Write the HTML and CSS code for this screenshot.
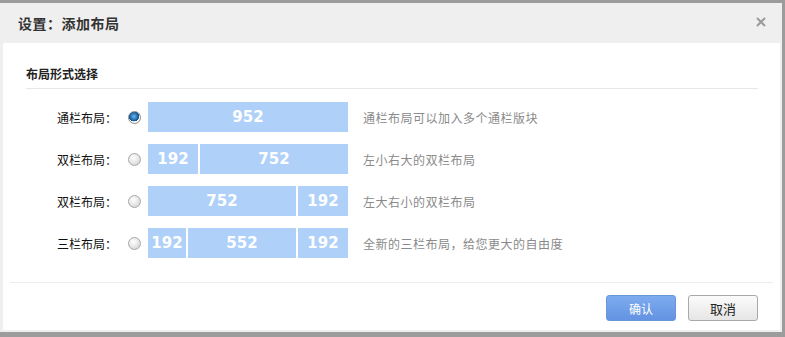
FILE: index.html
```html
<!DOCTYPE html>
<html lang="zh-CN">
<head>
<meta charset="utf-8">
<title>设置：添加布局</title>
<link rel="stylesheet" href="styles.css">
</head>
<body>
<div class="dialog">
  <div class="dialog-head">
    <h1 class="dialog-title">设置：添加布局</h1>
    <span class="dialog-close" aria-label="关闭">
      <svg width="10" height="10" viewBox="0 0 10 10"><path d="M1 1 L9 9 M9 1 L1 9" stroke="#9a9a9a" stroke-width="2" fill="none"/></svg>
    </span>
  </div>
  <div class="dialog-body">
    <div class="section-title">布局形式选择</div>
    <div class="layout-list">
      <div class="layout-row">
        <div class="row-label">通栏布局：</div>
        <span class="radio checked"></span>
        <div class="bar">
          <div class="seg w200">952</div>
        </div>
        <div class="row-desc">通栏布局可以加入多个通栏版块</div>
      </div>
      <div class="layout-row">
        <div class="row-label">双栏布局：</div>
        <span class="radio"></span>
        <div class="bar">
          <div class="seg w50">192</div>
          <div class="seg w148">752</div>
        </div>
        <div class="row-desc">左小右大的双栏布局</div>
      </div>
      <div class="layout-row">
        <div class="row-label">双栏布局：</div>
        <span class="radio"></span>
        <div class="bar">
          <div class="seg w148">752</div>
          <div class="seg w50">192</div>
        </div>
        <div class="row-desc">左大右小的双栏布局</div>
      </div>
      <div class="layout-row">
        <div class="row-label">三栏布局：</div>
        <span class="radio"></span>
        <div class="bar">
          <div class="seg w38">192</div>
          <div class="seg w108">552</div>
          <div class="seg w50">192</div>
        </div>
        <div class="row-desc">全新的三栏布局，给您更大的自由度</div>
      </div>
    </div>
    <div class="dialog-foot">
      <button class="btn btn-primary">确认</button>
      <button class="btn btn-default">取消</button>
    </div>
  </div>
</div>
</body>
</html>
```
FILE: styles.css
```css
html, body {
  margin: 0;
  padding: 0;
  background: #ffffff;
}
body {
  font-family: "Noto Sans CJK SC", "Liberation Sans", sans-serif;
  font-size: 12px;
  color: #222;
}
.dialog {
  width: 785px;
  height: 337px;
  box-sizing: border-box;
  background: #efefef;
  border-top: 3px solid #9c9c9c;
  border-right: 3px solid #9c9c9c;
  border-bottom: 5px solid #9c9c9c;
  padding: 0 2px 2px 3px;
  display: flex;
  flex-direction: column;
}
.dialog-head {
  height: 40px;
  display: flex;
  align-items: center;
  justify-content: space-between;
  padding: 0 14px 0 15px;
}
.dialog-title {
  margin: 0;
  font-size: 14px;
  font-weight: bold;
  color: #333;
  line-height: 40px;
  letter-spacing: 0.5px;
}
.dialog-close {
  display: flex;
  width: 10px;
  height: 10px;
  margin-top: -2px;
}
.dialog-body {
  flex: 1;
  background: #fff;
  display: flex;
  flex-direction: column;
}
.section-title {
  margin: 0 22px 0 23px;
  padding: 24px 0 7px;
  font-size: 12px;
  line-height: 14px;
  font-weight: bold;
  color: #222;
  border-bottom: 1px solid #e6e6e6;
}
.layout-list {
  display: flex;
  flex-direction: column;
  gap: 12px;
  margin-top: 13px;
}
.layout-row {
  display: flex;
  align-items: center;
  height: 30px;
}
.row-label {
  width: 114px;
  text-align: right;
  color: #111;
  font-size: 12px;
}
.radio {
  width: 11px;
  height: 11px;
  margin: 0 7px 0 11px;
  border-radius: 50%;
  border: 1px solid #a8a8a8;
  background: radial-gradient(circle at 40% 35%, #ffffff 0%, #e4e4e4 55%, #c9c9c9 100%);
  box-sizing: content-box;
}
.radio.checked {
  border-color: #8a8a8a;
  background:
    radial-gradient(circle at 45% 40%, #6fb5e8 0%, #1e6fb0 40%, #0d4a80 55%, transparent 58%),
    radial-gradient(circle, #ffffff 60%, #d8d8d8 100%);
}
.bar {
  display: flex;
  gap: 2px;
  width: 200px;
  height: 30px;
}
.seg {
  background: #aed0f9;
  color: #fff;
  font-family: "DejaVu Sans", "Liberation Sans", sans-serif;
  font-weight: bold;
  font-size: 15px;
  display: flex;
  align-items: center;
  justify-content: center;
}
.w200 { width: 200px; }
.w148 { width: 148px; }
.w108 { width: 108px; }
.w50 { width: 50px; }
.w38 { width: 38px; }
.row-desc {
  margin-left: 15px;
  color: #8a8a8a;
  font-size: 12px;
  letter-spacing: 0.5px;
}
.dialog-foot {
  margin: 24px 7px 0 7px;
  border-top: 1px solid #ececec;
  padding: 12px 15px 0 0;
  display: flex;
  justify-content: flex-end;
  gap: 12px;
}
.btn {
  width: 70px;
  height: 26px;
  border-radius: 3px;
  font-family: "Noto Sans CJK SC", "Liberation Sans", sans-serif;
  font-size: 12px;
  padding: 0;
  cursor: pointer;
}
.btn-primary {
  background: linear-gradient(#7eabef, #6393e2);
  border: 1px solid #6a95d8;
  color: #fff;
}
.btn-default {
  background: linear-gradient(#fbfbfb, #e6e6e6);
  border: 1px solid #a9a9a9;
  color: #222;
  font-size: 13px;
}
```
